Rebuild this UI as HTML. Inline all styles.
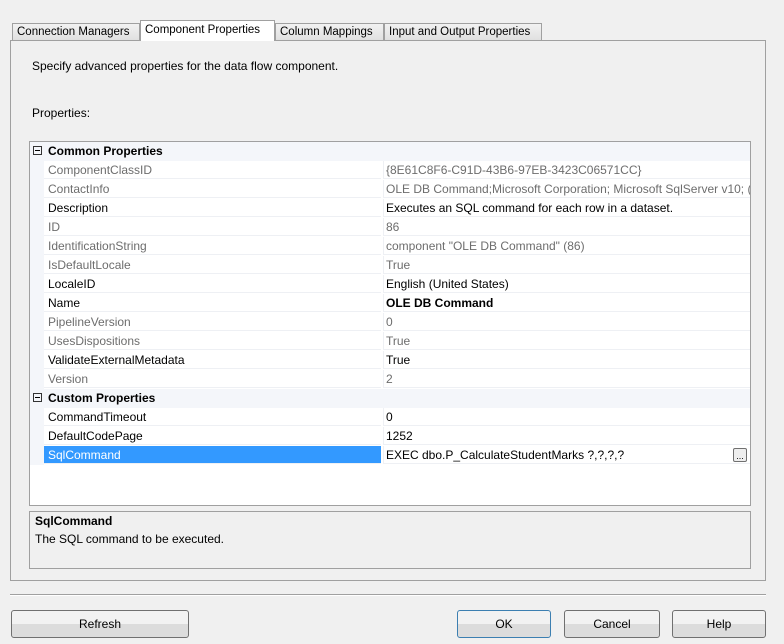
<!DOCTYPE html>
<html><head><style>
body{margin:0;width:784px;height:644px;background:#f0f0f0;font-family:"Liberation Sans",sans-serif;font-size:12px;color:#000;position:relative;overflow:hidden}
.a{position:absolute}
.tab{position:absolute;top:23px;height:17px;border:1px solid #a0a0a0;border-bottom:none;background:linear-gradient(#f2f2f2,#e0e0e0);line-height:17px;padding:0 4px;box-sizing:border-box;white-space:nowrap;overflow:hidden;font-size:11.5px}
.grid{position:absolute;left:29px;top:141px;width:722px;height:365px;border:1px solid #a0a0a0;background:#fff;box-sizing:border-box}
.row{position:absolute;left:0;width:720px;height:19px;line-height:19px}
.n{position:absolute;left:14px;width:337px;height:18px;padding-left:4px;border-bottom:1px solid #eef0f4;box-sizing:border-box}
.v{position:absolute;left:353px;width:367px;height:18px;padding-left:2px;border-bottom:1px solid #eef0f4;border-left:1px solid #eef0f4;box-sizing:border-box;white-space:nowrap;overflow:hidden}
.g{color:#6d6d6d}
.hdr{background:#f4f6fa;font-weight:bold}
.pm{position:absolute;left:3px;top:4px;width:9px;height:9px;border:1px solid #333;box-sizing:border-box}
.pm:after{content:"";position:absolute;left:1px;top:3px;width:5px;height:1px;background:#000}
.btn{position:absolute;top:610px;height:28px;border:1px solid #707070;border-radius:3px;background:linear-gradient(#f2f2f2 50%,#dcdcdc 50%);box-sizing:border-box;text-align:center;line-height:26px}
</style></head><body>
<div class="a" style="left:10px;top:40px;width:756px;height:541px;border:1px solid #a0a0a0;box-sizing:border-box;background:#f0f0f0"></div>
<div class="tab" style="left:12px;width:128px">Connection Managers</div>
<div class="tab" style="left:140px;top:20px;height:21px;width:135px;background:#f0f0f0;line-height:19px;background:#fff">Component Properties</div>
<div class="tab" style="left:275px;width:109px">Column Mappings</div>
<div class="tab" style="left:384px;width:158px">Input and Output Properties</div>
<div class="a" style="left:32px;top:59px">Specify advanced properties for the data flow component.</div>
<div class="a" style="left:32px;top:106px">Properties:</div>
<div class="grid">
<div class="a" style="left:0;top:0;width:14px;height:323px;background:#f4f6fa"></div>
<div class="row hdr" style="top:0"><div class="pm"></div><span style="position:absolute;left:18px">Common Properties</span></div>
<div class="row g" style="top:19px"><div class="n">ComponentClassID</div><div class="v">{8E61C8F6-C91D-43B6-97EB-3423C06571CC}</div></div>
<div class="row g" style="top:38px"><div class="n">ContactInfo</div><div class="v">OLE DB Command;Microsoft Corporation; Microsoft SqlServer v10; (C</div></div>
<div class="row" style="top:57px"><div class="n">Description</div><div class="v">Executes an SQL command for each row in a dataset.</div></div>
<div class="row g" style="top:76px"><div class="n">ID</div><div class="v">86</div></div>
<div class="row g" style="top:95px"><div class="n">IdentificationString</div><div class="v">component "OLE DB Command" (86)</div></div>
<div class="row g" style="top:114px"><div class="n">IsDefaultLocale</div><div class="v">True</div></div>
<div class="row" style="top:133px"><div class="n">LocaleID</div><div class="v">English (United States)</div></div>
<div class="row" style="top:152px"><div class="n">Name</div><div class="v" style="font-weight:bold">OLE DB Command</div></div>
<div class="row g" style="top:171px"><div class="n">PipelineVersion</div><div class="v">0</div></div>
<div class="row g" style="top:190px"><div class="n">UsesDispositions</div><div class="v">True</div></div>
<div class="row" style="top:209px"><div class="n">ValidateExternalMetadata</div><div class="v">True</div></div>
<div class="row g" style="top:228px"><div class="n">Version</div><div class="v">2</div></div>
<div class="row hdr" style="top:247px"><div class="pm"></div><span style="position:absolute;left:18px">Custom Properties</span></div>
<div class="row" style="top:266px"><div class="n">CommandTimeout</div><div class="v">0</div></div>
<div class="row" style="top:285px"><div class="n">DefaultCodePage</div><div class="v">1252</div></div>
<div class="row" style="top:304px"><div class="n" style="background:#3399ff;color:#fff">SqlCommand</div><div class="v">EXEC dbo.P_CalculateStudentMarks ?,?,?,?</div>
<div class="a" style="left:703px;top:2px;width:14px;height:14px;border:1px solid #707070;border-radius:2px;background:#eee;font-size:9px;line-height:14px;text-align:center;box-sizing:border-box">...</div></div>
</div>
<div class="a" style="left:29px;top:511px;width:722px;height:58px;border:1px solid #a0a0a0;box-sizing:border-box"></div>
<div class="a" style="left:35px;top:514px;font-weight:bold">SqlCommand</div>
<div class="a" style="left:35px;top:532px">The SQL command to be executed.</div>
<div class="a" style="left:10px;top:594px;width:756px;height:1px;background:#a0a0a0;border-bottom:1px solid #fff"></div>
<div class="btn" style="left:11px;width:178px">Refresh</div>
<div class="btn" style="left:457px;width:94px;border-color:#3c7fb1">OK</div>
<div class="btn" style="left:564px;width:96px">Cancel</div>
<div class="btn" style="left:672px;width:94px">Help</div>
</body></html>
